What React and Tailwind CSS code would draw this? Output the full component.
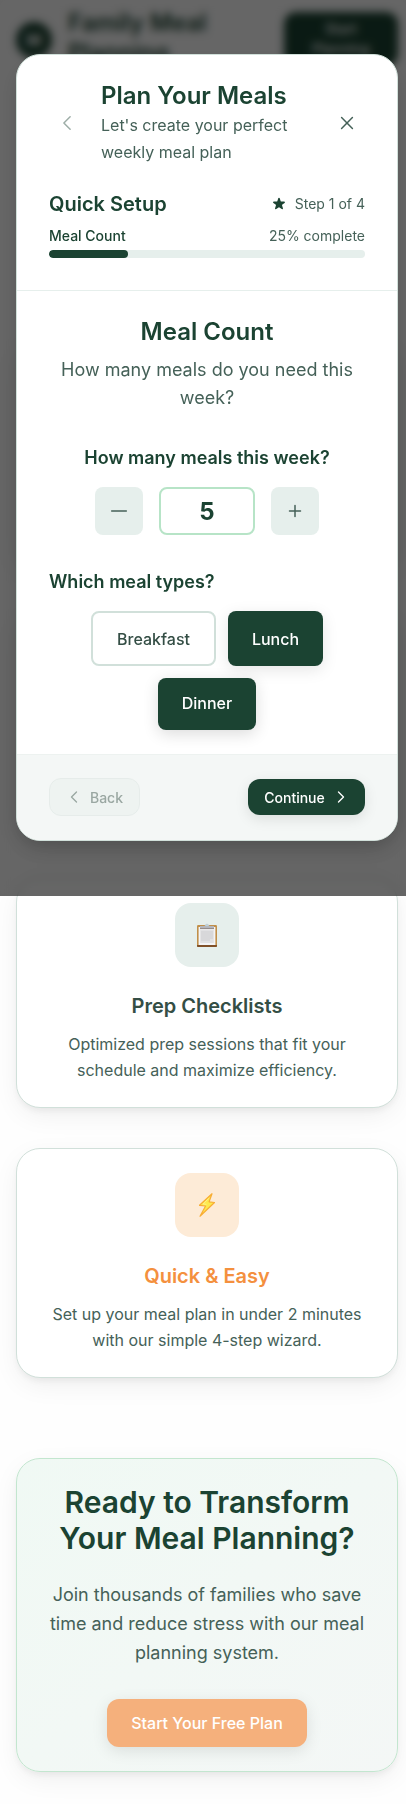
import React from "react";

const cardShadow = "shadow-[0_4px_6px_-1px_rgba(0,0,0,0.05),0_8px_28px_-3px_rgba(0,0,0,0.07)]";

function Icon({ d, className, strokeWidth = 1.5 }) {
  return (
    <svg className={className} viewBox="0 0 24 24" fill="none" stroke="currentColor" strokeWidth={strokeWidth} strokeLinecap="round" strokeLinejoin="round">
      <path d={d} />
    </svg>
  );
}

const chevronLeft = "M15.75 19.5 8.25 12l7.5-7.5";
const chevronRight = "m8.25 4.5 7.5 7.5-7.5 7.5";

function Clipboard() {
  return (
    <svg className="h-[25px] w-5" viewBox="0 0 20 25">
      <rect y="2" width="20" height="22" rx="1.2" fill="#c18f4a" />
      <path d="M0 22h20v1a1 1 0 0 1-1 1H1a1 1 0 0 1-1-1z" fill="#805028" />
      <path d="M1.6 4h16.8v18H1.6z" fill="#f4f4f6" />
      <path d="M3.2 7h13.6v13H3.2z" fill="#e1e1e3" />
      <path d="M4 9h12M4 11h12M4 13h12M4 15h12M4 17h9" stroke="#d0d0d2" strokeWidth="1.1" />
      <path d="M3 3h14v2.6H3z" fill="#b4b5bb" />
      <path d="M3 5.1h14v1H3z" fill="#8f8583" />
      <path d="M7.2 3.2C8.4 2.8 8.3.8 10 .8s1.600 2 2.800 2.400z" fill="#b9c8cf" />
      <circle cx="10" cy="2" r=".6" fill="#e6efec" />
    </svg>
  );
}

function Bolt() {
  return (
    <svg className="h-6 w-4" viewBox="0 0 16 24">
      <path d="M13 .7.500 12.300l6.100.700L1 23.200 15.500 9.500l-5.400-.700z" fill="#fde94e" stroke="#f8ad35" strokeWidth="1.200" strokeLinejoin="round" />
      <path d="m9.800 5.300-5.600 5.700 3.200.300" fill="none" stroke="#fff6a4" strokeWidth=".7" />
    </svg>
  );
}

function FeatureCard({ icon, title, text, tile, titleColor }) {
  return (
    <section className={`flex h-[230px] flex-col items-center rounded-[24px] border border-[#d1e0da] bg-white px-6 pt-6 text-center ${cardShadow}`}>
      {title && (
        <>
          <div className={`flex size-16 shrink-0 items-center justify-center rounded-2xl ${tile}`}>{icon}</div>
          <h3 className={`mt-[25px] text-[20px] leading-7 font-semibold ${titleColor}`}>{title}</h3>
          <p className="mt-[11px] text-[16px] leading-[26px] text-[#456158]">{text}</p>
        </>
      )}
    </section>
  );
}

function PlannerModal() {
  return (
    <div className="flex h-[787px] w-[382px] flex-col overflow-hidden rounded-[24px] border border-[#d1e0da] bg-white shadow-[0_10px_25px_-5px_rgba(0,0,0,0.2)]">
      <div className="h-[236px] shrink-0 border-b border-[#e6efec] px-8 pt-[25px]">
        <div className="flex items-center gap-4">
          <button className="flex size-9 items-center justify-center text-[#9dada7]"><Icon d={chevronLeft} className="size-5" strokeWidth={1.8} /></button>
          <div className="flex-1">
            <h2 className="text-[24px] leading-8 font-semibold text-[#1b4332]">Plan Your Meals</h2>
            <p className="text-[16px] leading-[27.2px] text-[#456158]">Let's create your perfect weekly meal plan</p>
          </div>
          <button className="flex size-9 items-center justify-center text-[#456158]"><Icon d="M5.500 18.500l13-13M5.500 5.500l13 13" className="size-5" strokeWidth={1.8} /></button>
        </div>
        <div className="mt-6 flex h-7 items-center justify-between">
          <h3 className="text-[20px] leading-7 font-semibold text-[#1b4332]">Quick Setup</h3>
          <div className="flex items-center gap-2 text-[14px] leading-5 text-[#456158]">
            <svg className="size-4 text-[#1b4332]" viewBox="0 0 20 20" fill="currentColor"><path d="M9.049 2.927c.3-.921 1.603-.921 1.902 0l1.07 3.292a1 1 0 00.95.69h3.462c.969 0 1.371 1.24.588 1.81l-2.8 2.034a1 1 0 00-.364 1.118l1.07 3.292c.3.921-.755 1.688-1.54 1.118l-2.8-2.034a1 1 0 00-1.175 0l-2.8 2.034c-.784.57-1.838-.197-1.539-1.118l1.07-3.292a1 1 0 00-.364-1.118L2.98 8.72c-.783-.57-.38-1.81.588-1.81h3.461a1 1 0 00.951-.69l1.07-3.292z" /></svg>
            <span>Step 1 of 4</span>
          </div>
        </div>
        <div className="mt-2 flex h-5 items-center justify-between text-[14px] leading-5">
          <span className="font-medium text-[#1b4332]">Meal Count</span>
          <span className="text-[#456158]">25% complete</span>
        </div>
        <div className="mt-1 h-2 overflow-hidden rounded-full bg-[#e6efec]"><div className="h-2 w-1/4 rounded-full bg-[#1b4332]" /></div>
      </div>

      <div className="h-[463px] shrink-0 px-8 pt-[25px]">
        <h2 className="text-center text-[24px] leading-8 font-semibold text-[#1b4332]">Meal Count</h2>
        <p className="mt-2 text-center text-[18px] leading-7 text-[#456158]">How many meals do you need this week?</p>
        <h4 className="mt-8 text-center text-[18px] leading-7 font-semibold text-[#1b4332]">How many meals this week?</h4>
        <div className="mt-[15px] flex justify-center gap-4">
          <button className="flex size-12 items-center justify-center rounded-lg bg-[#e6efec] text-[#456158]"><Icon d="M4.700 12h14.600" className="size-6" /></button>
          <div className="flex h-12 w-24 items-center justify-center rounded-lg border-2 border-[#b7e4c7] pt-0.5 text-[24px] font-bold text-[#1b4332]">5</div>
          <button className="flex size-12 items-center justify-center rounded-lg bg-[#e6efec] text-[#456158]"><Icon d="M12 6.500v11M6.500 12h11" className="size-6" /></button>
        </div>
        <h4 className="mt-[33px] text-[18px] leading-7 font-semibold text-[#1b4332]">Which meal types?</h4>
        <div className="mt-[15px] flex flex-wrap justify-center gap-3 text-[16px] font-medium">
          <button className="h-[55px] w-[125px] rounded-lg border-2 border-[#d1e0da] text-[#344e45]">Breakfast</button>
          <button className="h-[55px] w-[95px] rounded-lg bg-[#1b4332] text-white shadow-[0_4px_16px_rgba(0,0,0,0.1)]">Lunch</button>
          <button className="h-[52px] w-[98px] rounded-lg bg-[#1b4332] pb-0.5 text-white shadow-[0_4px_16px_rgba(0,0,0,0.14)]">Dinner</button>
        </div>
      </div>

      <div className="flex flex-1 items-center justify-between border-t border-[#edf2f0] bg-[#f4f7f6] px-8 pb-px text-[14px] font-medium">
        <button className="flex h-[38px] w-[91px] items-center justify-center gap-2 rounded-xl border border-[#e6ecea] bg-[#eef3f1] text-[#9aa7a2]"><Icon d={chevronLeft} className="size-4" strokeWidth={2} />Back</button>
        <button className="flex h-[36px] w-[117px] items-center justify-center gap-2 rounded-xl bg-[#1b4332] text-white shadow-[0_4px_14px_rgba(0,0,0,0.1)]"><span>Continue</span><Icon d={chevronRight} className="size-4" strokeWidth={2} /></button>
      </div>
    </div>
  );
}

export default function App() {
  return (
    <div className="relative h-[1804px] overflow-hidden bg-[#fefefe] font-['Inter',sans-serif]">
      <header className="flex h-[78px] items-start justify-between pt-3 pr-2 pl-4">
        <div className="flex items-center gap-4">
          <div className="flex size-9 items-center justify-center rounded-full bg-[#1b4332] text-[16px] font-bold text-white">M</div>
          <h1 className="-mt-1 w-[150px] text-[24px] leading-[30px] font-semibold text-[#1b4332]">Family Meal Planning</h1>
        </div>
        <button className="h-[54px] w-[114px] rounded-xl bg-[#1b4332] px-5 text-[14px] leading-5 font-medium text-white">Start Planning</button>
      </header>
      <main className="flex flex-col gap-10 pt-[260px] pr-2 pl-4">
        <FeatureCard />
        <FeatureCard />
        <FeatureCard icon={<Clipboard />} title="Prep Checklists" text="Optimized prep sessions that fit your schedule and maximize efficiency." tile="bg-[#e6efec]" titleColor="text-[#344e45]" />
        <FeatureCard icon={<Bolt />} title="Quick & Easy" text="Set up your meal plan in under 2 minutes with our simple 4-step wizard." tile="bg-[#fdebd7]" titleColor="text-[#f4903e]" />
        <section className={`mt-10 flex h-[314px] flex-col items-center rounded-[24px] border border-[#c3e6cf] bg-linear-to-br from-[#f0f9f4] to-[#f4f7f6] px-6 pt-[25px] text-center ${cardShadow}`}>
          <h2 className="text-[30px] leading-9 font-semibold text-[#1b4332]">Ready to Transform Your Meal Planning?</h2>
          <p className="mt-6 text-[18px] leading-[29px] text-[#456158]">Join thousands of families who save time and reduce stress with our meal planning system.</p>
          <button className="mt-8 h-12 w-[200px] rounded-xl bg-[#f5b07c] text-[16px] font-medium text-white shadow-[0_4px_16px_rgba(0,0,0,0.1)]">Start Your Free Plan</button>
        </section>
      </main>
      <div className="absolute inset-x-0 top-0 flex h-[896px] justify-end bg-black/60 pt-[54px] pr-2 backdrop-blur-[4px]">
        <PlannerModal />
      </div>
    </div>
  );
}
